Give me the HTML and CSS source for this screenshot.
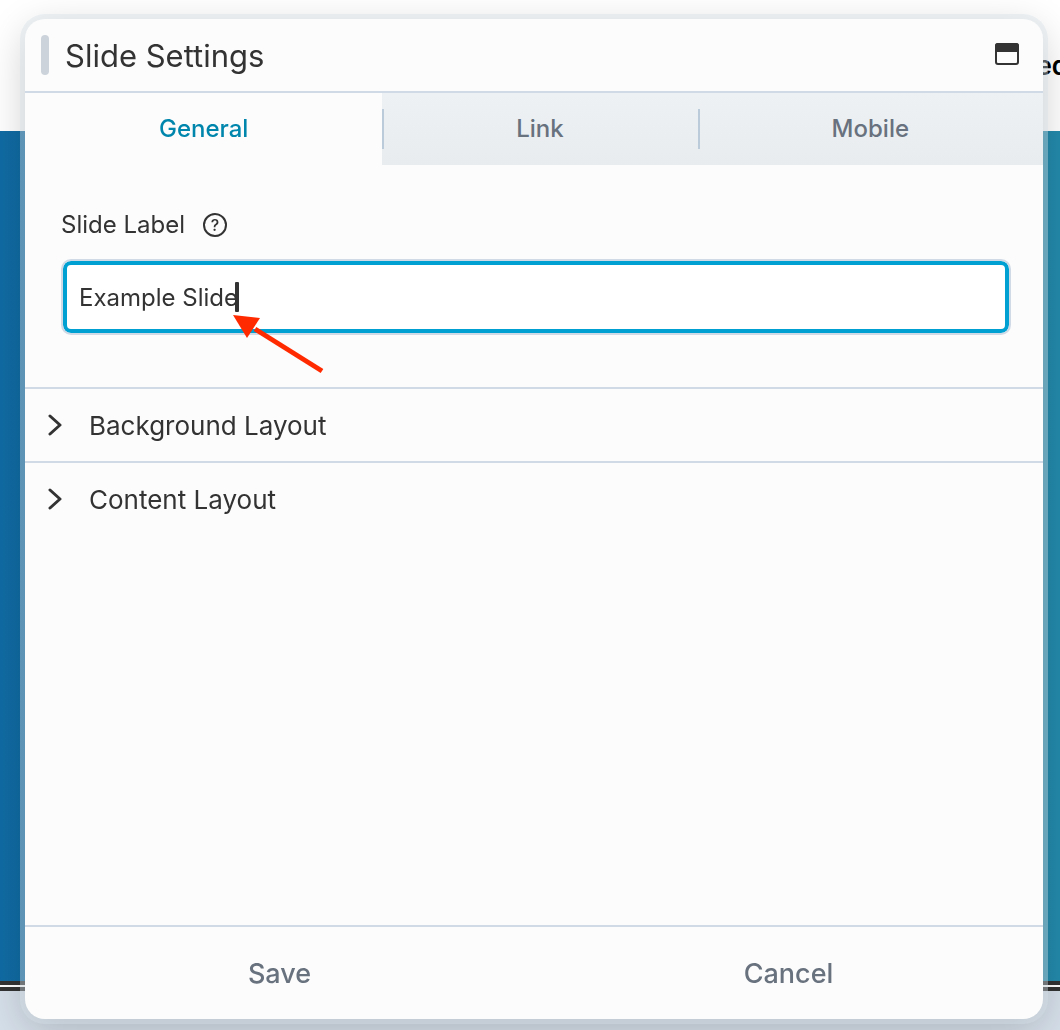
FILE: index.html
```html
<!DOCTYPE html>
<html lang="en">
<head>
    <meta charset="UTF-8">
    <meta name="viewport" content="width=device-width, initial-scale=1.0">
    <title>Slide Settings</title>
    <link rel="stylesheet" href="styles.css">
</head>
<body>
    <div class="page">
        <div class="page-header"><span>ed</span></div>
        <div class="page-hero"></div>
        <div class="page-divider"></div>
        <div class="page-footer"></div>
    </div>

    <div class="modal" role="dialog" aria-labelledby="modalTitle">
        <div class="modal-header">
            <span class="drag-handle"></span>
            <h1 id="modalTitle">Slide Settings</h1>
            <button class="window-button" type="button" aria-label="Expand window">
                <svg width="24" height="22" viewBox="0 0 24 22">
                    <rect x="1" y="1" width="22" height="20" rx="2" fill="none" stroke="#333" stroke-width="2"/>
                    <path d="M0 9V3a3 3 0 0 1 3-3h18a3 3 0 0 1 3 3v6z" fill="#333"/>
                </svg>
            </button>
        </div>

        <div class="tabs" role="tablist">
            <button class="tab active" type="button" role="tab" aria-selected="true">General</button>
            <button class="tab" type="button" role="tab" aria-selected="false">Link</button>
            <button class="tab" type="button" role="tab" aria-selected="false">Mobile</button>
        </div>

        <div class="modal-body">
            <div class="field">
                <div class="field-label">
                    <label for="slideLabel">Slide Label</label>
                    <button class="help" type="button" aria-label="Help">?</button>
                </div>
                <div class="input-wrap">
                    <input type="text" id="slideLabel" value="Example Slide">
                    <span class="caret"></span>
                    <svg class="arrow" width="92" height="60" viewBox="0 0 92 60">
                        <path d="M22 14L89 56" stroke="#ff2a00" stroke-width="5"/>
                        <path d="M0 0L27 3L14 23z" fill="#ff2a00"/>
                    </svg>
                </div>
            </div>

            <button class="section" type="button">
                <svg width="14" height="22" viewBox="0 0 14 22"><path d="M2 2l10 9-10 9" /></svg>
                Background Layout
            </button>
            <button class="section" type="button">
                <svg width="14" height="22" viewBox="0 0 14 22"><path d="M2 2l10 9-10 9" /></svg>
                Content Layout
            </button>
        </div>

        <div class="modal-footer">
            <button type="button">Save</button>
            <button type="button">Cancel</button>
        </div>
    </div>
</body>
</html>
```
FILE: styles.css
```css
* {
    box-sizing: border-box;
}
body {
    margin: 0;
    font-family: Inter, "Liberation Sans", sans-serif;
    color: #333;
}
button {
    margin: 0;
    padding: 0;
    border: none;
    background: none;
    color: inherit;
    font-family: inherit;
    cursor: pointer;
}
.page {
    display: flex;
    flex-direction: column;
    height: 100vh;
    overflow: hidden;
}
.page-header {
    display: flex;
    justify-content: flex-end;
    align-items: center;
    height: 131px;
    background: #fff;
    color: #000;
    font-size: 26px;
    font-weight: 600;
}
.page-header span {
    margin-right: -8px;
}
.page-hero {
    flex: 1;
    background: linear-gradient(to right, #106ba3, #248aab);
}
.page-divider {
    height: 10px;
    border: solid #333;
    border-width: 4px 0;
    background: #fff;
}
.page-footer {
    height: 39px;
    background: #d5dfe9;
}
.modal {
    position: fixed;
    top: 19px;
    right: 17px;
    bottom: 11px;
    left: 25px;
    display: flex;
    flex-direction: column;
    border-radius: 20px;
    background: #fcfcfc;
    box-shadow: 0 0 0 5px rgba(213, 223, 230, 0.4), 0 10px 40px rgba(0, 0, 0, 0.2);
}
.modal-header {
    display: flex;
    align-items: center;
    height: 74px;
    padding: 0 24px 0 16px;
    border-bottom: 2px solid #d0dae6;
}
.drag-handle {
    width: 8px;
    height: 40px;
    margin-right: 16px;
    border-radius: 4px;
    background: #ccd3da;
}
.modal-header h1 {
    flex: 1;
    margin: 0;
    font-size: 31px;
    font-weight: 400;
}
.window-button {
    display: flex;
    padding-bottom: 2px;
}
.tabs {
    display: flex;
}
.tab {
    position: relative;
    flex: 1 1 auto;
    height: 72px;
    padding-bottom: 2px;
    background: linear-gradient(#edf1f4, #e8ecef);
    color: #68717e;
    font-size: 24px;
    font-weight: 500;
}
.tab.active {
    background: none;
    color: #0086ad;
}
.tab:not(.active)::before {
    content: "";
    position: absolute;
    top: 16px;
    left: 0;
    width: 2px;
    height: 40px;
    background: #bccbda;
}
.modal-body {
    flex: 1;
}
.field {
    padding: 44px 32px 52px 36px;
}
.field-label {
    display: flex;
    align-items: center;
    gap: 18px;
    height: 32px;
    margin-bottom: 18px;
    font-size: 24px;
}
.field-label label {
    padding-bottom: 2px;
}
.help {
    width: 24px;
    height: 24px;
    border: 2px solid #333;
    border-radius: 50%;
    font-size: 16px;
    font-weight: 500;
    line-height: 20px;
}
.input-wrap {
    position: relative;
}
.input-wrap input {
    display: block;
    width: 100%;
    height: 76px;
    padding: 0 16px;
    border: 2px solid #d0dae6;
    border-radius: 10px;
    outline: none;
    background: #fff;
    box-shadow: inset 0 0 0 4px #00a0d2;
    color: #333;
    font-family: inherit;
    font-size: 24px;
}
.caret {
    position: absolute;
    top: 23px;
    left: 174px;
    width: 4px;
    height: 30px;
    border-radius: 1px;
    background: #333;
}
.arrow {
    position: absolute;
    top: 56px;
    left: 172px;
}
.section {
    display: flex;
    align-items: center;
    gap: 27px;
    width: 100%;
    height: 74px;
    padding: 0 23px;
    border-top: 2px solid #d0dae6;
    font-size: 26px;
    text-align: left;
}
.section svg {
    fill: none;
    stroke: #333;
    stroke-width: 3;
    stroke-linecap: round;
    stroke-linejoin: round;
}
.modal-footer {
    display: flex;
    border-top: 2px solid #d0dae6;
}
.modal-footer button {
    flex: 1;
    height: 92px;
    color: #68717e;
    font-size: 27px;
    font-weight: 500;
}
```
